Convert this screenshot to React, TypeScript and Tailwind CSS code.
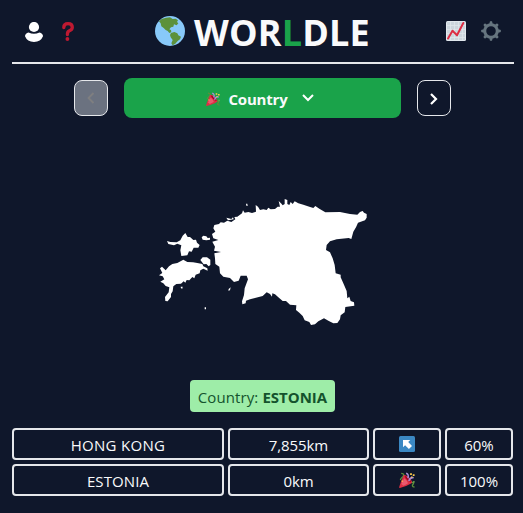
import React from "react";

const Globe = () => (
  <svg viewBox="0 0 90 90" className="h-[30px] w-[30px] shrink-0">
    <circle cx="45" cy="45" r="45" fill="#88c9f9" />
    <path
      fill="#5c913b"
      d="M12 16L20 9L33 5L45 4L53 9L62 8L69 13L66 18L70 22L65 28L57 25L55 32L48 34L43 40L48 42L49 49L43 51L38 45L32 42L26 36L19 31L17 22ZM48 51L58 48L67 52L70 58L78 62L75 70L68 75L61 83L53 88L49 82L53 72L47 64L45 57Z"
    />
  </svg>
);

const Party = ({ className }: { className: string }) => (
  <svg viewBox="0 0 36 36" className={className}>
    <path fill="none" stroke="#5c913b" strokeWidth="3" d="M5 3Q14 4 9 10Q4 14 3 18M35 34Q27 32 32 27Q35 23 27 23" />
    <path fill="#dd2e44" d="M11 7C7 14 3 26 0 35L2 36C11 34 21 30 29 25C31 19 18 6 11 7Z" />
    <path fill="#ea596e" d="M12 14C16 17 20 22 20 26L10 31L5 27Z" />
    <path fill="#a0041e" d="M13 9C16 8 28 19 27 23C23 23 13 14 13 9Z" />
    <path fill="none" stroke="#aa8dd8" strokeWidth="3.4" d="M16 3Q23 5 20 14M22 20Q25 11 33 13" />
    <path fill="#ffcc4d" d="M25 3h4v4h-4zM31 5h4v4h-4zM27 10h3v3h-3zM6 19h3v3H6z" />
    <path fill="#77b255" d="M32 20h3v4h-3z" />
  </svg>
);

const Chart = () => (
  <svg viewBox="0 0 20 20" className="h-5 w-5">
    <rect width="20" height="20" rx="1.5" fill="#e1e8ed" />
    <path fill="#ccd6dd" d="M1 1h18v18H1z" />
    <path stroke="#e1e8ed" strokeWidth=".7" d="M4.5 1v18M8.5 1v18M12.5 1v18M16.5 1v18M1 4.5h18M1 8.5h18M1 12.5h18M1 16.5h18" />
    <path fill="none" stroke="#dd2e44" strokeWidth="2" strokeLinecap="round" strokeLinejoin="round" d="M2 17.5L6.5 9.7L11 14.2L17.3 2" />
  </svg>
);

const Gear = () => (
  <svg viewBox="0 0 36 36" className="h-5 w-5">
    <g fill="#66757f">
      {[0, 45, 90, 135, 180, 225, 270, 315].map((angle) => (
        <path key={angle} d="M15.8 1.2Q18-1.2 20.2 1.2L21.5 8H14.5Z" transform={`rotate(${angle} 18 18)`} />
      ))}
    </g>
    <circle cx="18" cy="18" r="11.3" fill="none" stroke="#66757f" strokeWidth="5.4" />
  </svg>
);

const Estonia = () => (
  <svg viewBox="0 0 690 450" className="ml-[138px] h-[150px] w-[230px]" fill="#fff">
    <path d="M193 105L207 102L212 97L222 98L232 92L244 96L256 88L253 81L262 80L270 74L276 70L279 61L284 68L295 66L306 69L318 65L317 45L324 50L330 60L340 58L350 60L355 53L362 58L375 57L383 50L390 50L386 33L393 40L398 46L404 42L404 27L412 30L412 42L418 45L422 36L428 42L434 34L445 40L460 44L478 50L490 54L496 48L508 56L526 67L570 66L600 72L622 74L630 66L638 63L642 68L650 72L650 83L645 91L624 98L618 112L610 125L604 147L596 144L560 148L540 154L530 165L528 180L540 187L548 205L554 225L557 250L572 254L572 262L580 280L590 303L592 325L598 320L602 333L612 337L613 347L586 351L584 367L572 376L570 388L562 399L550 400L535 392L522 385L505 394L495 403L483 405L478 396L464 391L458 378L448 368L438 360L439 346L420 344L408 333L398 333L385 322L375 313L367 310L366 320L360 312L350 307L338 318L300 328L288 332L287 340L277 343L276 334L282 315L284 295L294 268L290 257L272 257L266 272L252 276L240 264L220 260L210 250L208 230L196 222L195 205L193 190L213 186L192 182L195 170L187 155L205 150L190 145L186 132L196 125L190 115Z" />
    <path d="M51 153L61 156L80 157L91 151L98 137L106 129L113 141L120 141L130 150L138 149L141 158L149 165L145 173L131 173L125 185L117 184L112 196L94 198L91 181L94 166L82 161L72 166L55 162Z" />
    <path d="M30 235L36 230L47 241L57 229L67 222L82 219L100 209L112 216L129 217L142 219L157 222L160 229L172 235L173 242L160 236L151 241L149 250L137 254L133 265L127 261L118 271L110 270L106 278L101 274L93 281L79 282L70 289L68 304L63 312L63 321L53 334L46 333L45 321L56 307L58 292L47 288L40 280L31 275L43 268L38 259L27 256L37 249Z" />
    <path d="M151 210L158 202L171 202L181 209L181 225L176 229L169 222L161 223ZM155 142L160 137L169 139L173 144L180 143L180 149L169 151L158 149ZM288 41L292 41L293 48L289 47ZM236 297L242 292L240 301L235 302ZM92 290L98 290L97 296L93 295ZM164 352L168 352L168 358L164 358ZM229 83L244 87L249 82L251 88L234 91Z" />
  </svg>
);

const Arrow = () => (
  <svg viewBox="0 0 16 16" className="h-4 w-4">
    <rect width="16" height="16" rx="1.5" fill="#3b88c3" />
    <path fill="#fff" d="M4 4H11.3L9.2 6.1L13 9.9L9.9 13L6.1 9.2L4 11.3Z" />
  </svg>
);

const Cell = ({ children }: { children: React.ReactNode }) => (
  <div className="flex h-8 items-center justify-center rounded border-2 border-gray-200">{children}</div>
);

export default function App() {
  return (
    <main className="h-[513px] w-[523px] overflow-hidden bg-slate-900 pl-3 font-['Open_Sans','Noto_Sans',sans-serif] text-[15px] text-gray-50">
      <header className="flex h-16 w-[502px] items-center border-b-2 border-gray-200">
        <svg viewBox="0 0 20 20" className="ml-3 mt-0.5 h-5 w-5" fill="#fff">
          <circle cx="10" cy="5" r="5.1" />
          <path d="M4.6 10.4Q10 13.3 15.4 10.4Q19 11.2 19 14.3Q16.8 19.8 10 20Q3.2 19.8 1 14.3Q1 11.2 4.6 10.4Z" />
        </svg>
        <svg viewBox="0 0 12 19" className="ml-[18px] h-[19px] w-3" fill="none">
          <path d="M1.8 5.6Q1.8 1.7 6 1.7Q10.3 1.7 10.3 5.2Q10.3 7.7 7 9Q5.4 9.8 5.4 12.5" stroke="#be1931" strokeWidth="3.3" strokeLinecap="round" />
          <circle cx="5.4" cy="17" r="1.9" fill="#be1931" />
        </svg>
        <div className="ml-[81px] flex w-[216px] items-center">
          <Globe />
          <h1 className="ml-[9px] whitespace-nowrap pt-1 text-[36px] font-bold leading-10 tracking-[0.15px]">WOR<span className="text-[#1aa34a]">L</span>DLE</h1>
        </div>
        <div className="ml-[75px] flex gap-[15px]"><Chart /><Gear /></div>
      </header>
      <nav className="mt-3.5 flex w-[501px] items-center justify-center gap-4">
        <button className="flex h-9 w-[34px] items-center justify-center rounded-lg border border-gray-200 bg-[#6b7280]">
          <svg viewBox="0 0 8 12" className="h-3 w-2" fill="none" stroke="#7f7f80" strokeWidth="1.8"><path d="M6.5 1L1.5 6L6.5 11" /></svg>
        </button>
        <button className="flex h-10 w-[277px] items-center justify-center rounded-lg bg-[#1aa34a] pr-1.5 font-bold">
          <Party className="mt-0.5 h-3.5 w-3.5" />
          <span className="ml-[9px] w-[59px] whitespace-nowrap pt-[3px] text-left tracking-[-0.2px]">Country</span>
          <svg viewBox="0 0 12 8" className="ml-3.5 h-2 w-3" fill="none" stroke="#fff" strokeWidth="2"><path d="M1 1L6 6L11 1" /></svg>
        </button>
        <button className="flex h-9 w-[34px] items-center justify-center rounded-lg border border-gray-200">
          <svg viewBox="0 0 8 12" className="mt-0.5 h-3 w-2" fill="none" stroke="#fff" strokeWidth="2.2"><path d="M1 1L6 6L1 11" /></svg>
        </button>
      </nav>
      <section className="h-[262px] pt-[72px]"><Estonia /></section>
      <div className="ml-[178px] flex h-8 w-[145px] items-center justify-center whitespace-pre rounded bg-[#9eeda8] pt-[3px] text-[#14532d]">
        <span className="tracking-[0.1px]">Country: </span><b className="font-bold">ESTONIA</b>
      </div>
      <section className="mt-4 grid w-[501px] grid-cols-[212px_141px_68px_68px] gap-1">
        <Cell><span className="pt-[3px] tracking-[0.3px]">HONG KONG</span></Cell>
        <Cell><span className="pt-[3px] tracking-[-0.1px]">7,855km</span></Cell>
        <Cell><Arrow /></Cell>
        <Cell><span className="pt-[3px]">60%</span></Cell>
        <Cell><span className="pt-[3px] tracking-[0.1px]">ESTONIA</span></Cell>
        <Cell><span className="pt-[3px] tracking-[-0.1px]">0km</span></Cell>
        <Cell><Party className="h-4 w-4" /></Cell>
        <Cell><span className="pt-[3px]">100%</span></Cell>
      </section>
    </main>
  );
}
